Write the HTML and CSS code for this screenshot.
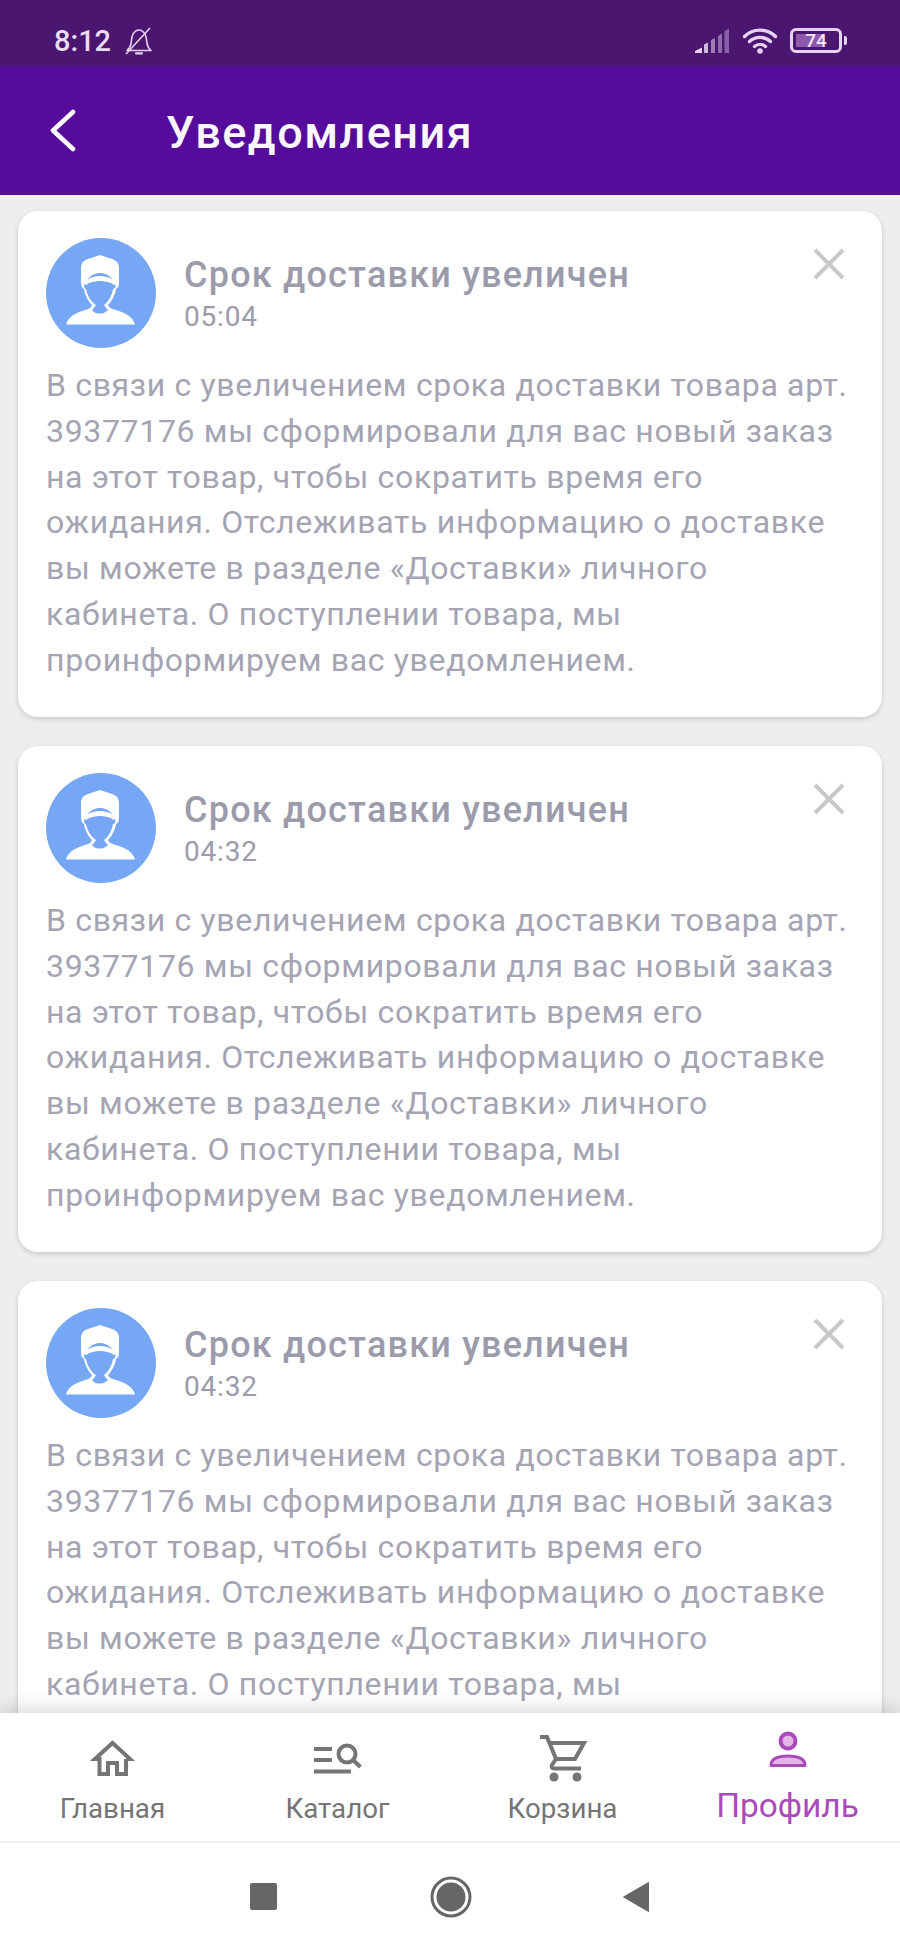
FILE: index.html
```html
<!DOCTYPE html>
<html lang="ru">
<head>
<meta charset="utf-8">
<title>Уведомления</title>
<link rel="stylesheet" href="styles.css">
</head>
<body>
<div class="app">
  <div class="statusbar">
    <div class="status-left">
      <span class="clock">8:12</span>
      <svg class="bell" viewBox="0 0 28 28" width="28" height="28"><path d="M2 23.500c2.600-2 3.600-3.800 4-6.800l.9-6.400C7.500 6.500 10.500 3 14 3s6.500 3.500 7.100 7.300l1 6.400c.4 3 1.400 4.800 3.900 6.800z" fill="none" stroke="#e6d3f2" stroke-width="1.600" stroke-linejoin="round"/><path d="M11 26.300h6" stroke="#e6d3f2" stroke-width="2.200" stroke-linecap="round"/><path d="M1 27L25 1" stroke="#e6d3f2" stroke-width="1.600"/></svg>
    </div>
    <div class="status-right">
      <svg class="signal" viewBox="0 0 34 25" width="34" height="25"><path d="M0 25v-2l7-3.500V25z" fill="#e6d3f2"/><path d="M9 25v-8.500l4-2V25z" fill="#e6d3f2" opacity=".85"/><path d="M16 25V12l4-2v15z" fill="#e6d3f2" opacity=".55"/><path d="M23 25V8l4-2.500V25z" fill="#e6d3f2" opacity=".45"/><path d="M29.500 25V3l4.500-2.500V25z" fill="#e6d3f2" opacity=".4"/></svg>
      <svg class="wifi" viewBox="0 0 36 27" width="36" height="27"><path d="M2.500 9.500C11 1 25 1 33.500 9.500M7.500 14.500c6-5.500 15-5.500 21 0M12.500 19.500c3.200-2.800 7.800-2.800 11 0" fill="none" stroke="#e6d3f2" stroke-width="3.400" stroke-linecap="round"/><circle cx="18" cy="24" r="2.800" fill="#e6d3f2"/></svg>
      <div class="battery"><div class="battery-fill"></div><span class="battery-num">74</span></div>
      <div class="battery-cap"></div>
    </div>
  </div>
  <header class="topbar">
    <svg class="back" viewBox="0 0 30 44" width="30" height="44"><path d="M25 3L5 21.500 25 40" fill="none" stroke="#fff" stroke-width="4.500" stroke-linecap="round" stroke-linejoin="round"/></svg>
    <h1 class="title">Уведомления</h1>
  </header>
  <main class="feed">
    <article class="card">
      <div class="card-head">
        <svg class="avatar" viewBox="0 0 110 110" width="110" height="110"><g id="worker"><circle cx="55" cy="55" r="55" fill="#75a7f5"/><path d="M35 30C35 25 38 22 42 21L54 17 66 21C70 22 73 25 73 30V44C73 48 72 50 70 51 69 58 65 64 62 67 63 70 66 71 70 72 80 75 87 79 89 86.500H20C22 79 29 75 39 72 43 71 45 70 46 67 43 64 39 58 38 51 36 50 35 48 35 44Z" fill="#fff"/><path d="M38 48C38 46 39 46 40 47 44 44 49 43 54 43 59 43 64 44 68 47 69 46 69.500 46 69.500 48 69.500 50 68 51 67 51 66 58 62 64 58 67 59 69 61 71 62 72 59 75 56 75.500 54 75.500 51 75.500 48 75 46 72 47 71 49 69 50 67 45 64 41 57 40 51 39 51 38 50 38 48Z" fill="#75a7f5"/><path d="M41 42C45 37 49 35 54 35 59 35 63 37 67 42 63 39 59 38 54 38 49 38 45 39 41 42Z" fill="#75a7f5"/></g></svg>
        <div class="head-text">
          <div class="card-title">Срок доставки увеличен</div>
          <div class="card-time">05:04</div>
        </div>
        <svg class="close" viewBox="0 0 34 34" width="34" height="34"><path d="M3 3l28 28M31 3L3 31" stroke="#c8c8c8" stroke-width="4"/></svg>
      </div>
      <p class="card-body">В связи с увеличением срока доставки товара арт. 39377176 мы сформировали для вас новый заказ на этот товар, чтобы сократить время его ожидания. Отслеживать информацию о доставке вы можете в разделе «Доставки» личного кабинета. О поступлении товара, мы проинформируем вас уведомлением.</p>
    </article>
    <article class="card">
      <div class="card-head">
        <svg class="avatar" viewBox="0 0 110 110" width="110" height="110"><use href="#worker"/></svg>
        <div class="head-text">
          <div class="card-title">Срок доставки увеличен</div>
          <div class="card-time">04:32</div>
        </div>
        <svg class="close" viewBox="0 0 34 34" width="34" height="34"><path d="M3 3l28 28M31 3L3 31" stroke="#c8c8c8" stroke-width="4"/></svg>
      </div>
      <p class="card-body">В связи с увеличением срока доставки товара арт. 39377176 мы сформировали для вас новый заказ на этот товар, чтобы сократить время его ожидания. Отслеживать информацию о доставке вы можете в разделе «Доставки» личного кабинета. О поступлении товара, мы проинформируем вас уведомлением.</p>
    </article>
    <article class="card">
      <div class="card-head">
        <svg class="avatar" viewBox="0 0 110 110" width="110" height="110"><use href="#worker"/></svg>
        <div class="head-text">
          <div class="card-title">Срок доставки увеличен</div>
          <div class="card-time">04:32</div>
        </div>
        <svg class="close" viewBox="0 0 34 34" width="34" height="34"><path d="M3 3l28 28M31 3L3 31" stroke="#c8c8c8" stroke-width="4"/></svg>
      </div>
      <p class="card-body">В связи с увеличением срока доставки товара арт. 39377176 мы сформировали для вас новый заказ на этот товар, чтобы сократить время его ожидания. Отслеживать информацию о доставке вы можете в разделе «Доставки» личного кабинета. О поступлении товара, мы проинформируем вас уведомлением.</p>
    </article>
  </main>
  <nav class="tabs">
    <div class="tab">
      <div class="icon-box"><svg viewBox="10 6 46 40" width="46" height="40"><path d="M46 27H50L32.500 11 15 27H19.500V42H28V31H37V42H46V27" fill="none" stroke="#757575" stroke-width="4"/></svg></div>
      <span class="tab-label">Главная</span>
    </div>
    <div class="tab">
      <div class="icon-box"><svg viewBox="0 0 50 36" width="50" height="36"><path d="M1 9H19M1 20H19M1 31.500H38" stroke="#757575" stroke-width="4"/><circle cx="34" cy="14" r="8.500" fill="none" stroke="#757575" stroke-width="4"/><path d="M40 20L47.500 27" stroke="#757575" stroke-width="4"/></svg></div>
      <span class="tab-label">Каталог</span>
    </div>
    <div class="tab">
      <div class="icon-box"><svg viewBox="5 4 54 50" width="54" height="50"><path d="M9 8H16L25 30H44L53 14H18" fill="none" stroke="#757575" stroke-width="4"/><path d="M25 30L21 36C20 38 21 39.500 23 39.500H50" fill="none" stroke="#757575" stroke-width="4"/><circle cx="23" cy="48" r="4.500" fill="#757575"/><circle cx="46" cy="48" r="4.500" fill="#757575"/></svg></div>
      <span class="tab-label">Корзина</span>
    </div>
    <div class="tab tab-active">
      <div class="icon-box"><svg viewBox="0 0 40 40" width="40" height="40"><circle cx="20" cy="11" r="7.500" fill="#e4b6e8" stroke="#a94bbb" stroke-width="4"/><path d="M3 35.500C3 29 10 26 20 26S37 29 37 35.500Z" fill="#e4b6e8" stroke="#a94bbb" stroke-width="3" stroke-linejoin="round"/></svg></div>
      <span class="tab-label">Профиль</span>
    </div>
  </nav>
  <div class="sysnav">
    <div class="sys-square"></div>
    <svg class="sys-home" viewBox="0 0 42 42" width="42" height="42"><circle cx="21" cy="21" r="19" fill="none" stroke="#666" stroke-width="3"/><circle cx="21" cy="21" r="14.500" fill="#666"/></svg>
    <svg class="sys-back" viewBox="0 0 28 32" width="28" height="32"><path d="M1.500 16L26.500 1.500v29z" fill="#666" stroke="#666" stroke-width="1" stroke-linejoin="round"/></svg>
  </div>
</div>
</body>
</html>
```

FILE: styles.css
```css
* { box-sizing: border-box; }
html, body { margin: 0; padding: 0; }
body { font-family: Roboto, "Noto Sans", sans-serif; background: #eee; }
.app { width: 900px; height: 1950px; display: flex; flex-direction: column; overflow: hidden; }

.statusbar { height: 66px; background: #4a1670; display: flex; justify-content: space-between; align-items: center; padding: 15px 0 0 54px; flex: none; }
.status-left { display: flex; align-items: center; gap: 14px; }
.clock { font-size: 29px; font-weight: 500; color: #eadcf3; }
.bell { display: block; }
.status-right { display: flex; align-items: center; padding-right: 53px; }
.signal { margin-right: 13px; }
.wifi { margin-right: 12px; }
.battery { position: relative; width: 52px; height: 25px; border: 3px solid #e6d3f2; border-radius: 6px; display: flex; align-items: center; justify-content: center; }
.battery-fill { position: absolute; left: 3px; top: 3px; bottom: 3px; width: 26px; background: #8c5aa8; }
.battery-num { position: relative; font-size: 19px; font-weight: 500; color: #f3e9f8; }
.battery-cap { width: 3px; height: 9px; margin-left: 2px; background: #e6d3f2; border-radius: 0 2px 2px 0; }

.topbar { height: 129px; background: #560c9a; display: flex; align-items: center; padding: 0 0 0 48px; flex: none; position: relative; z-index: 2; }
.back { display: block; margin-top: 1px; }
.title { margin: 4px 0 0 88px; font-size: 45px; font-weight: 500; letter-spacing: 1.5px; color: #fbf7fe; }

.feed { flex: 1; min-height: 0; overflow-y: auto; scrollbar-width: none; padding: 16px 18px 0; display: flex; flex-direction: column; gap: 29px; }
.card { flex: none; height: 506px; background: #fff; border-radius: 20px; padding: 27px 28px 0; box-shadow: 0 2px 5px rgba(0,0,0,.16); }
.card-head { display: flex; align-items: flex-start; }
.avatar { display: block; flex: none; }
.head-text { flex: 1; margin-left: 28px; padding-top: 16px; }
.card-title { font-size: 36px; font-weight: 500; line-height: 42px; letter-spacing: 1.2px; color: #9b9bab; }
.card-time { font-size: 28px; line-height: 36px; margin-top: 3px; letter-spacing: .8px; color: #9b9bab; }
.close { display: block; flex: none; margin: 9px 8px 0 0; }
.card-body { margin: 15px 0 0; width: 802px; font-size: 32px; line-height: 45.8px; letter-spacing: .67px; color: #a4a4b3; }

.tabs { height: 128px; flex: none; background: #fff; display: flex; position: relative; z-index: 2; box-shadow: 0 -4px 18px rgba(0,0,0,.16); }
.tab { flex: 1; display: flex; flex-direction: column; align-items: center; padding-top: 20px; }
.icon-box { height: 50px; display: flex; align-items: center; justify-content: center; }
.icon-box svg { display: block; }
.tab-label { margin-top: 8px; font-size: 27.7px; line-height: 36px; color: #757575; }
.tab-active { padding-top: 12px; }
.tab-active .tab-label { font-size: 33.4px; line-height: 40px; margin-top: 11px; color: #a94bbb; }

.sysnav { height: 109px; flex: none; background: #fff; border-top: 2px solid #f1f1f1; display: flex; align-items: center; justify-content: center; position: relative; z-index: 2; }
.sys-square { width: 27px; height: 27px; background: #666; border-radius: 2px; }
.sys-home { display: block; margin-left: 153px; }
.sys-back { display: block; margin-left: 150px; }
```
